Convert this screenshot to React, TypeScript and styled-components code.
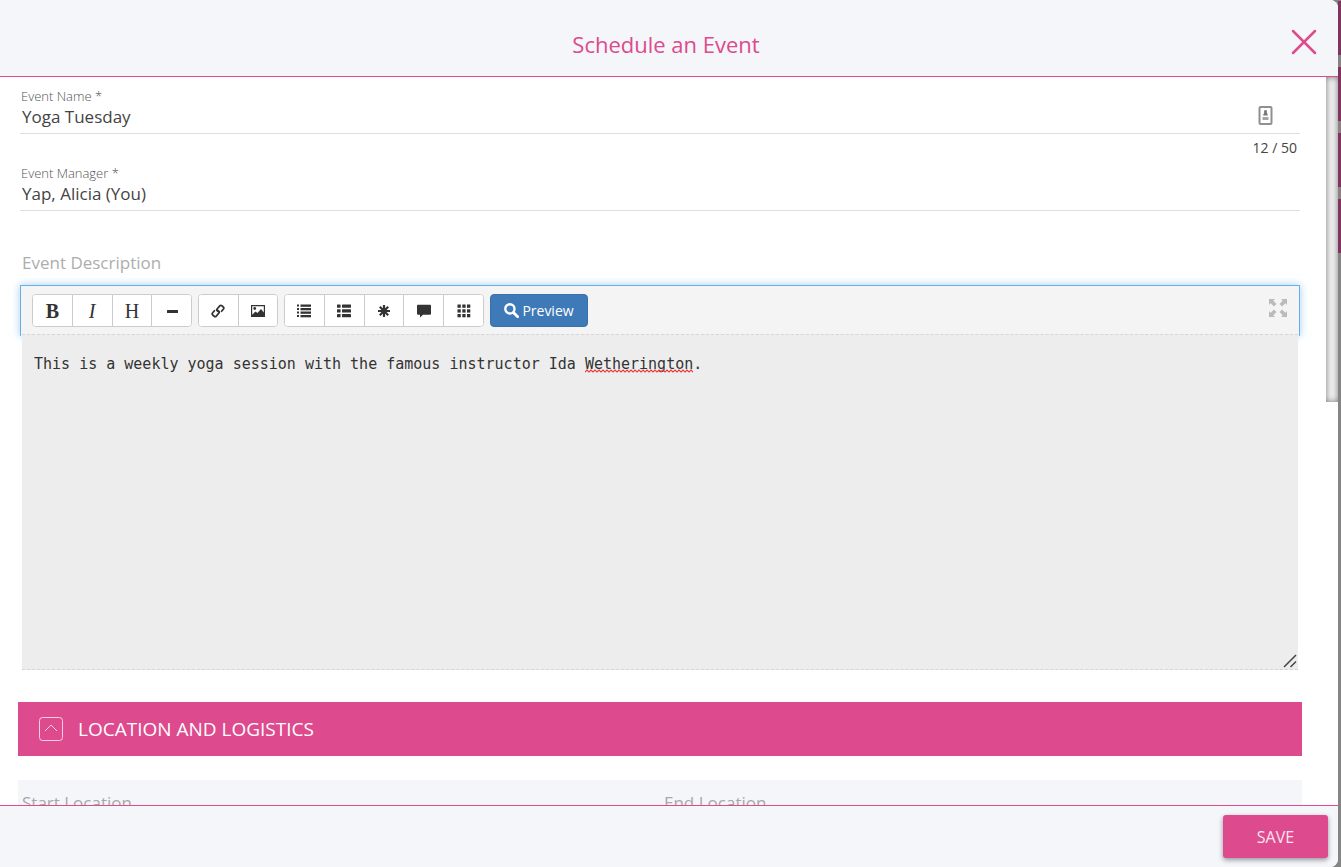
import React, { useState } from "react";
import styled, { createGlobalStyle } from "styled-components";

const pink = "#dd4a8e";
const pale = "#f4f6fa";

const GlobalStyle = createGlobalStyle`
  *, *::before, *::after { box-sizing: border-box; }
  body { margin: 0; background: #858585; font-family: "Open Sans", sans-serif; color: #333; }
  button, input, textarea { font: inherit; color: inherit; }
`;

const Screen = styled.div`
  display: flex;
  height: 100vh;
  overflow: hidden;
`;

const Dialog = styled.form`
  flex: 1;
  min-width: 0;
  display: flex;
  flex-direction: column;
  background: #fff;
  border-radius: 0 8px 8px 0;
  overflow: hidden;
`;

const Backdrop = styled.div`
  flex: none;
  width: 3px;
  display: flex;
  flex-direction: column;
  gap: 12px;
  padding-top: 1px;
  background: #858585;
`;

const BackdropTile = styled.div`
  height: 54px;
  background: #803560;
`;

const Header = styled.header`
  flex: none;
  display: grid;
  grid-template-columns: 1fr auto 1fr;
  align-items: center;
  height: 77px;
  padding: 12px 20px 0 14px;
  background: ${pale};
  border-bottom: 1px solid ${pink};
`;

const Title = styled.h1`
  grid-column: 2;
  margin: 0;
  font-size: 22px;
  line-height: 30px;
  font-weight: 400;
  color: ${pink};
`;

const CloseButton = styled.button`
  justify-self: end;
  display: flex;
  padding: 0;
  margin-bottom: 4px;
  border: 0;
  background: none;
  cursor: pointer;
`;

const Body = styled.div`
  flex: 1;
  min-height: 0;
  display: flex;
`;

const Content = styled.div`
  flex: 1;
  min-width: 0;
  overflow: hidden;
  padding: 10px 24px 0 18px;
`;

const ScrollTrack = styled.div`
  flex: none;
  width: 12px;
`;

const ScrollThumb = styled.div`
  height: 325px;
  background: #f0f0f0;
  box-shadow: inset 0 0 6px rgba(0, 0, 0, 0.5);
`;

const Fields = styled.div`
  padding: 0 2px;
`;

const Field = styled.div`
  display: flex;
  flex-direction: column;
  height: 47px;
  border-bottom: 1px solid #dedede;
`;

const FieldLabel = styled.label`
  padding-left: 1px;
  font-size: 13px;
  line-height: 18px;
  font-weight: 300;
  color: #555;
`;

const FieldRow = styled.div`
  display: flex;
  align-items: flex-start;
  padding: 0 27px 0 2px;
`;

const FieldInput = styled.input`
  flex: 1;
  min-width: 0;
  height: 24px;
  padding: 0;
  border: 0;
  outline: 0;
  background: none;
  font-size: 17px;
  line-height: 24px;
  color: #444;
`;

const Counter = styled.div`
  height: 30px;
  padding: 4px 3px 0 0;
  text-align: right;
  font-size: 14px;
  line-height: 20px;
  color: #444;
`;

const AreaLabel = styled.label`
  display: block;
  margin: 40px 0 10px;
  padding-left: 2px;
  font-size: 17px;
  line-height: 24px;
  color: #adadad;
`;

const Toolbar = styled.div`
  display: flex;
  align-items: flex-start;
  gap: 6px;
  height: 51px;
  padding: 8px 12px 8px 11px;
  background: #f4f4f4;
  border: 1px solid #66afe9;
  border-bottom: 0;
  box-shadow: 0 0 8px rgba(102, 175, 233, 0.6);
`;

const ButtonGroup = styled.div<{ $count: number }>`
  display: flex;
  flex: none;
  width: ${(p) => p.$count * 40}px;
  border: 1px solid #ccc;
  border-radius: 4px;
  background: #fff;
  overflow: hidden;
`;

const ToolButton = styled.button`
  flex: 1;
  display: flex;
  align-items: center;
  justify-content: center;
  height: 31px;
  padding: 0;
  border: 0;
  background: #fff;
  color: #333;
  cursor: pointer;
  & + & { border-left: 1px solid #ccc; }
`;

const Letter = styled.span<{ $bold?: boolean; $italic?: boolean }>`
  font-family: "Liberation Serif", serif;
  font-size: 20px;
  line-height: 20px;
  font-weight: ${(p) => (p.$bold ? 700 : 400)};
  font-style: ${(p) => (p.$italic ? "italic" : "normal")};
`;

const PreviewButton = styled.button`
  display: flex;
  align-items: center;
  justify-content: center;
  gap: 3px;
  width: 98px;
  height: 33px;
  padding: 0;
  border: 1px solid #3a70aa;
  border-radius: 4px;
  background: #3f7ab8;
  color: #fff;
  font-size: 14px;
  cursor: pointer;
`;

const ExpandButton = styled.button`
  display: flex;
  margin-left: auto;
  margin-top: 5px;
  padding: 0;
  border: 0;
  background: none;
  color: #bbb;
  cursor: pointer;
`;

const Editor = styled.div`
  position: relative;
  margin: -2px 2px 0;
  font-family: "DejaVu Sans Mono", monospace;
  font-size: 15px;
  line-height: 22px;
`;

const EditorArea = styled.textarea`
  display: block;
  width: 100%;
  height: 336px;
  padding: 18px 12px;
  border: 0;
  border-top: 1px dashed #d6d6d6;
  border-bottom: 1px dashed #d6d6d6;
  border-radius: 0;
  outline: 0;
  resize: none;
  background: #ededed;
`;

const SpellingMark = styled.svg`
  position: absolute;
  top: 35px;
  left: calc(12px + 61ch);
  width: 12ch;
  height: 4px;
  pointer-events: none;
`;

const ResizeGrip = styled.svg`
  position: absolute;
  right: 1px;
  bottom: 2px;
  pointer-events: none;
`;

const SectionHeader = styled.button`
  display: flex;
  align-items: center;
  gap: 15px;
  width: 100%;
  height: 54px;
  margin: 32px 0 24px;
  padding: 0 21px;
  border: 0;
  background: ${pink};
  color: #fff;
  font-size: 19px;
  line-height: 26px;
  text-align: left;
  cursor: pointer;
`;

const LocationPanel = styled.div`
  display: grid;
  grid-template-columns: 1fr 1fr;
  padding: 11px 0 40px;
  background: ${pale};
`;

const LocationField = styled.label`
  padding-left: 4px;
  font-size: 17px;
  line-height: 24px;
  color: #a8a8a8;
`;

const LocationInput = styled.input`
  display: block;
  width: 95%;
  height: 30px;
  border: 0;
  border-bottom: 1px solid #dedede;
  background: none;
`;

const Footer = styled.footer`
  flex: none;
  display: flex;
  justify-content: flex-end;
  align-items: flex-start;
  height: 62px;
  padding: 9px 10px;
  background: ${pale};
  border-top: 1px solid ${pink};
`;

const SaveButton = styled.button`
  width: 105px;
  height: 43px;
  border: 0;
  border-radius: 3px;
  background: ${pink};
  color: #fbe4ef;
  font-size: 16px;
  box-shadow: 0 2px 5px rgba(0, 0, 0, 0.4);
  cursor: pointer;
`;

function Glyph({ children, size = 14 }: { children: React.ReactNode; size?: number }) {
  return (
    <svg width={size} height={size} viewBox="0 0 14 14" fill="currentColor" aria-hidden="true">
      {children}
    </svg>
  );
}

const MinusGlyph = () => <Glyph><rect x="2" y="6" width="11" height="3" rx="0.5" /></Glyph>;

const LinkGlyph = () => (
  <Glyph>
    <g fill="none" stroke="currentColor" strokeWidth="1.7" strokeLinecap="round" strokeLinejoin="round">
      <path d="M8.200 8.300L6.300 6.900Q5.300 6 6.100 5L8.700 1.900Q9.700.9 10.800 1.700L12.300 3Q13.300 4 12.500 5L10.600 7.300" />
      <path d="M5.800 5.700L7.700 7.100Q8.700 8 7.900 9L5.300 12.100Q4.300 13.100 3.200 12.300L1.700 11Q.7 10 1.500 9L3.400 6.700" />
    </g>
  </Glyph>
);

const ImageGlyph = () => (
  <Glyph>
    <path fillRule="evenodd" d="M0 1h14v12H0zM1.200 2.200v8.600L4.500 7.500l2 1.600 3.500-4 2.800 3.400V2.200z" />
    <circle cx="3.700" cy="4.500" r="1.400" />
  </Glyph>
);

const ListGlyph = () => (
  <Glyph>
    {[0.5, 4, 7.5, 11].map((y) => (
      <g key={y}>
        <rect x="0" y={y} width="2" height="2" />
        <rect x="3.500" y={y} width="10.500" height="2.300" />
      </g>
    ))}
  </Glyph>
);

const LargeListGlyph = () => (
  <Glyph>
    {[0.5, 5.3, 10].map((y) => (
      <g key={y}>
        <rect x="0" y={y} width="3.600" height="3.300" rx="0.400" />
        <rect x="5" y={y} width="9" height="3.300" rx="0.400" />
      </g>
    ))}
  </Glyph>
);

const AsteriskGlyph = () => (
  <Glyph>
    <g stroke="currentColor" strokeWidth="2.200">
      <path d="M7 1v12M1 7h12M2.800 2.800l8.400 8.400M11.200 2.800l-8.400 8.400" />
    </g>
  </Glyph>
);

const CommentGlyph = () => (
  <Glyph>
    <path d="M1 .8h12q1 0 1 1v8q0 1-1 1H6l-3 2.700V10.800H1Q0 10.800 0 9.800V1.800Q0 .8 1 .8z" />
  </Glyph>
);

const GridGlyph = () => (
  <Glyph>
    {[0.5, 5.3, 10].map((y) => [0.5, 5.3, 10].map((x) => <rect key={`${x}-${y}`} x={x} y={y} width="3.300" height="3.300" />))}
  </Glyph>
);

const SearchGlyph = () => (
  <Glyph size={15}>
    <circle cx="5.500" cy="5.500" r="4.300" fill="none" stroke="currentColor" strokeWidth="2.200" />
    <path d="M8.800 8.800l4 4" stroke="currentColor" strokeWidth="2.600" strokeLinecap="round" />
  </Glyph>
);

function ContactIcon() {
  return (
    <svg width="15" height="20" viewBox="0 0 15 20" aria-hidden="true">
      <rect x="1.500" y="2" width="12" height="17" rx="1" fill="#fff" stroke="#909090" strokeWidth="2" />
      <circle cx="7.500" cy="6.500" r="1.400" fill="#777" />
      <path d="M6.500 7h2l1.500 3.500H5z" fill="#777" />
      <rect x="4.500" y="12" width="6" height="3" fill="#a5a5a5" />
    </svg>
  );
}

function ExpandIcon() {
  return (
    <svg width="18" height="18" viewBox="0 0 18 18" fill="currentColor" aria-hidden="true">
      {[0, 90, 180, 270].map((turn) => (
        <path key={turn} transform={`rotate(${turn} 9 9)`} d="M0 0h6L4.300 1.700 7.500 4.900 4.900 7.500 1.700 4.300 0 6z" />
      ))}
    </svg>
  );
}

export default function App() {
  const [name, setName] = useState("Yoga Tuesday");
  const [manager, setManager] = useState("Yap, Alicia (You)");
  const [description, setDescription] = useState(
    "This is a weekly yoga session with the famous instructor Ida Wetherington."
  );
  return (
    <>
      <GlobalStyle />
      <Screen>
        <Dialog onSubmit={(e) => e.preventDefault()}>
          <Header>
            <Title>Schedule an Event</Title>
            <CloseButton type="button" aria-label="Close">
              <svg width="28" height="28" viewBox="0 0 28 28" fill="none" stroke={pink} strokeWidth="2.500" strokeLinecap="round">
                <path d="M3 3l22 22M25 3L3 25" />
              </svg>
            </CloseButton>
          </Header>
          <Body>
            <Content>
              <Fields>
                <Field>
                  <FieldLabel htmlFor="event-name">Event Name *</FieldLabel>
                  <FieldRow>
                    <FieldInput id="event-name" value={name} onChange={(e) => setName(e.target.value)} />
                    <ContactIcon />
                  </FieldRow>
                </Field>
                <Counter>{name.length} / 50</Counter>
                <Field>
                  <FieldLabel htmlFor="event-manager">Event Manager *</FieldLabel>
                  <FieldRow>
                    <FieldInput id="event-manager" value={manager} onChange={(e) => setManager(e.target.value)} />
                  </FieldRow>
                </Field>
                <AreaLabel htmlFor="event-description">Event Description</AreaLabel>
                <Toolbar>
                  <ButtonGroup $count={4}>
                    <ToolButton type="button" aria-label="Bold"><Letter $bold>B</Letter></ToolButton>
                    <ToolButton type="button" aria-label="Italic"><Letter $italic>I</Letter></ToolButton>
                    <ToolButton type="button" aria-label="Heading"><Letter>H</Letter></ToolButton>
                    <ToolButton type="button" aria-label="Rule"><MinusGlyph /></ToolButton>
                  </ButtonGroup>
                  <ButtonGroup $count={2}>
                    <ToolButton type="button" aria-label="Link"><LinkGlyph /></ToolButton>
                    <ToolButton type="button" aria-label="Image"><ImageGlyph /></ToolButton>
                  </ButtonGroup>
                  <ButtonGroup $count={5}>
                    <ToolButton type="button" aria-label="Bulleted list"><ListGlyph /></ToolButton>
                    <ToolButton type="button" aria-label="Numbered list"><LargeListGlyph /></ToolButton>
                    <ToolButton type="button" aria-label="Code"><AsteriskGlyph /></ToolButton>
                    <ToolButton type="button" aria-label="Quote"><CommentGlyph /></ToolButton>
                    <ToolButton type="button" aria-label="Table"><GridGlyph /></ToolButton>
                  </ButtonGroup>
                  <PreviewButton type="button"><SearchGlyph />Preview</PreviewButton>
                  <ExpandButton type="button" aria-label="Full screen"><ExpandIcon /></ExpandButton>
                </Toolbar>
                <Editor>
                  <EditorArea
                    id="event-description"
                    spellCheck={false}
                    value={description}
                    onChange={(e) => setDescription(e.target.value)}
                  />
                  <SpellingMark aria-hidden="true">
                    <defs>
                      <pattern id="wave" width="4" height="4" patternUnits="userSpaceOnUse">
                        <path d="M-1 2L0 3l2-2 2 2 1-1" fill="none" stroke="#e33" strokeWidth="1.200" />
                      </pattern>
                    </defs>
                    <rect width="100%" height="4" fill="url(#wave)" />
                  </SpellingMark>
                  <ResizeGrip width="14" height="14" viewBox="0 0 14 14" stroke="#444" strokeWidth="1.500" aria-hidden="true">
                    <path d="M1 13L13 1M7.500 13L13 7.500" />
                  </ResizeGrip>
                </Editor>
              </Fields>
              <SectionHeader type="button" aria-expanded="true">
                <svg width="24" height="24" viewBox="0 0 24 24" fill="none" stroke="#fbd0e3" aria-hidden="true">
                  <rect x="0.500" y="0.500" width="23" height="23" rx="3" />
                  <path d="M6 14l6-6 6 6" />
                </svg>
                LOCATION AND LOGISTICS
              </SectionHeader>
              <LocationPanel>
                <LocationField>Start Location<LocationInput /></LocationField>
                <LocationField>End Location<LocationInput /></LocationField>
              </LocationPanel>
            </Content>
            <ScrollTrack><ScrollThumb /></ScrollTrack>
          </Body>
          <Footer>
            <SaveButton type="submit">SAVE</SaveButton>
          </Footer>
        </Dialog>
        <Backdrop aria-hidden="true">
          <BackdropTile />
          <BackdropTile />
          <BackdropTile />
          <BackdropTile />
        </Backdrop>
      </Screen>
    </>
  );
}
